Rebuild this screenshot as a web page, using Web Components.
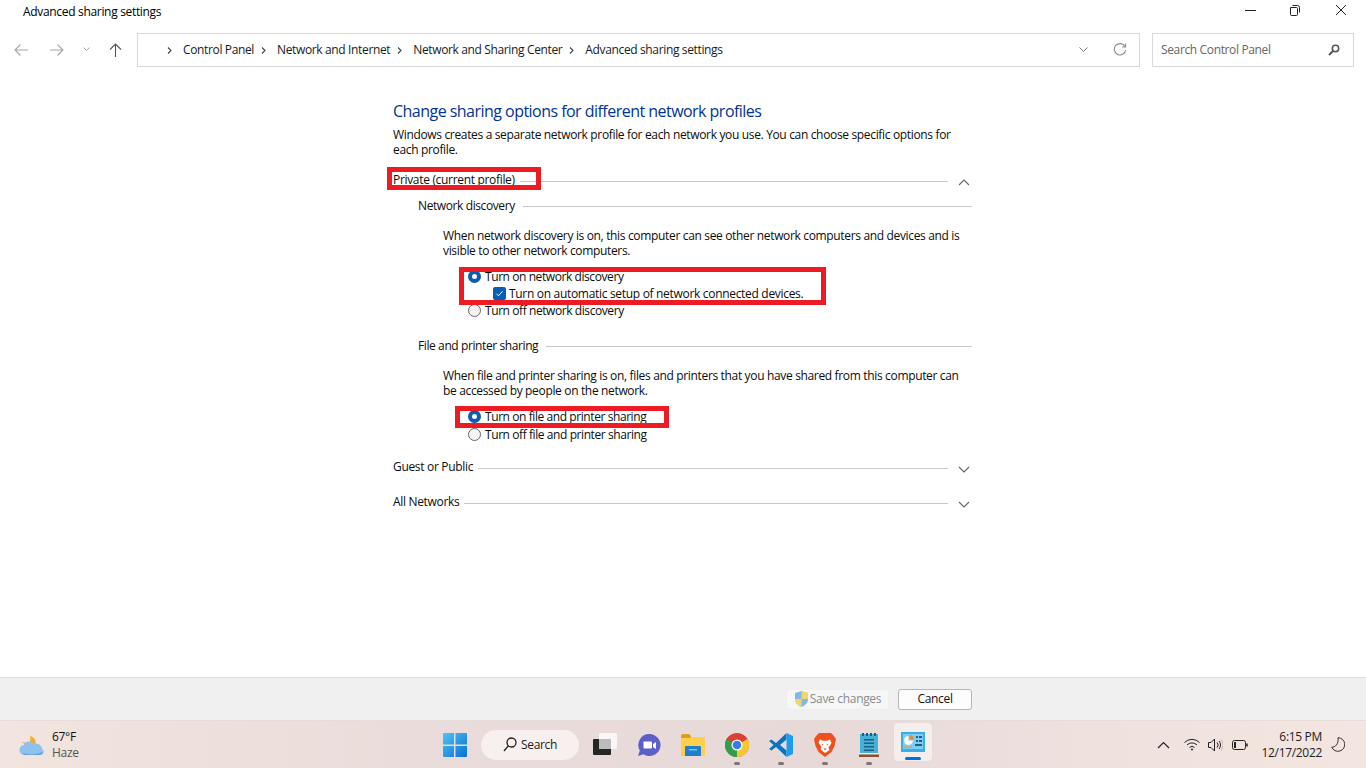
<!DOCTYPE html>
<html lang="en">
<head>
<meta charset="utf-8">
<title>Advanced sharing settings</title>
<style>
  html, body { margin: 0; height: 100%; overflow: hidden; background: #fff; }
  body { font: 12px/16px "Open Sans", "Liberation Sans", sans-serif; letter-spacing: -0.32px; color: #0c0c0c; }
</style>
</head>
<body>
<share-window>
  <win-titlebar slot="top">Advanced sharing settings</win-titlebar>
  <win-navbar slot="top"></win-navbar>

  <h-title>Change sharing options for different network profiles</h-title>
  <p-text>Windows creates a separate network profile for each network you use. You can choose specific options for each profile.</p-text>

  <profile-head open>Private (current profile)</profile-head>
  <group-head>Network discovery</group-head>
  <p-text indent>When network discovery is on, this computer can see other network computers and devices and is visible to other network computers.</p-text>
  <opt-radio checked style="margin-top:10px">Turn on network discovery</opt-radio>
  <opt-check>Turn on automatic setup of network connected devices.</opt-check>
  <opt-radio>Turn off network discovery</opt-radio>

  <group-head style="margin-top:18px">File and printer sharing</group-head>
  <p-text indent>When file and printer sharing is on, files and printers that you have shared from this computer can be accessed by people on the network.</p-text>
  <opt-radio checked style="margin-top:10px">Turn on file and printer sharing</opt-radio>
  <opt-radio style="margin-top:1px">Turn off file and printer sharing</opt-radio>

  <profile-head style="margin-top:15px">Guest or Public</profile-head>
  <profile-head style="margin-top:17px">All Networks</profile-head>

  <win-footer slot="bottom"></win-footer>
  <win-taskbar slot="bottom"></win-taskbar>
</share-window>

<red-box style="left:387px;top:167px;width:154px;height:23px"></red-box>
<red-box style="left:459px;top:267px;width:367px;height:38px"></red-box>
<red-box style="left:455px;top:406px;width:214px;height:22px"></red-box>

<script>
function shadow(el, html) {
  el.attachShadow({ mode: "open" }).innerHTML = html;
}

class ShareWindow extends HTMLElement {
  connectedCallback() {
    shadow(this, `<style>
      :host { display: flex; flex-direction: column; width: 1366px; height: 768px; }
      main { flex: 1; box-sizing: border-box; width: 579px; margin-left: 393px; padding-top: 33px; display: flex; flex-direction: column; }
    </style>
    <slot name="top"></slot>
    <main><slot></slot></main>
    <slot name="bottom"></slot>`);
  }
}

class WinTitlebar extends HTMLElement {
  connectedCallback() {
    shadow(this, `<style>
      :host { display: flex; align-items: center; height: 24px; padding-left: 23px; color: #000; }
      span { flex: 1; }
      svg { position: absolute; top: 4px; }
    </style>
    <span><slot></slot></span>
    <svg style="left:1245px" width="12" height="12" viewBox="0 0 12 12" fill="none" stroke="#222"><path d="M0 6.5h11"/></svg>
    <svg style="left:1289px" width="12" height="12" viewBox="0 0 12 12" fill="none" stroke="#222"><path d="M1.5 3.5h6a1 1 0 0 1 1 1v6a1 1 0 0 1-1 1h-5a1 1 0 0 1-1-1z"/><path d="M3.5 1.5h5a2 2 0 0 1 2 2v5"/></svg>
    <svg style="left:1335px" width="12" height="12" viewBox="0 0 12 12" fill="none" stroke="#222"><path d="M1 1l10 10M11 1L1 11"/></svg>`);
  }
}

class WinNavbar extends HTMLElement {
  connectedCallback() {
    const chev = `<svg class="sep" width="5" height="7" viewBox="0 0 5 7" fill="none" stroke="#444" stroke-width="1.1"><path d="M1 .5l3 3-3 3"/></svg>`;
    const crumbs = ["Control Panel", "Network and Internet", "Network and Sharing Center", "Advanced sharing settings"];
    shadow(this, `<style>
      :host { display: flex; align-items: center; height: 34px; margin-top: 9px; letter-spacing: -0.36px; }
      .btns { width: 137px; position: relative; height: 34px; flex: none; }
      .btns svg { position: absolute; top: 10px; }
      .addr { width: 1003px; height: 34px; box-sizing: border-box; border: 1px solid #d9d9d9; display: flex; align-items: center; padding-left: 29px; flex: none; color: #1a1a1a; }
      .addr span { margin-right: 7px; }
      .sep { margin: 0 11px 0 0; }
      .end { margin-left: auto; display: flex; align-items: center; gap: 25px; padding-right: 12px; }
      .search { width: 202px; height: 34px; box-sizing: border-box; border: 1px solid #d9d9d9; margin-left: 12px; display: flex; align-items: center; justify-content: space-between; padding: 0 13px 0 8px; color: #666; flex: none; }
    </style>
    <div class="btns">
      <svg style="left:14px" width="14" height="14" viewBox="0 0 14 14" fill="none" stroke="#a6a6a6" stroke-width="1.1"><path d="M14 7H1M6.5 1.5L1 7l5.500 5.500"/></svg>
      <svg style="left:50px" width="14" height="14" viewBox="0 0 14 14" fill="none" stroke="#a6a6a6" stroke-width="1.1"><path d="M0 7h13M7.500 1.500L13 7l-5.500 5.500"/></svg>
      <svg style="left:83px;top:14px" width="7" height="5" viewBox="0 0 7 5" fill="none" stroke="#a6a6a6"><path d="M.5 .5l3 3 3-3"/></svg>
      <svg style="left:109px" width="13" height="14" viewBox="0 0 13 14" fill="none" stroke="#555" stroke-width="1.100"><path d="M6.500 14V1M1 6.500L6.500 1 12 6.500"/></svg>
    </div>
    <div class="addr">
      ${crumbs.map((c) => `${chev}<span>${c}</span>`).join("")}
      <div class="end">
        <svg width="9" height="6" viewBox="0 0 9 6" fill="none" stroke="#777"><path d="M.5 .5l4 4 4-4"/></svg>
        <svg width="14" height="14" viewBox="0 0 14 14" fill="none" stroke="#8a8a8a" stroke-width="1.100"><path d="M12 3.500A5.700 5.700 0 1 0 12.700 7"/><path d="M12.500 .5v3.500H9"/></svg>
      </div>
    </div>
    <div class="search">
      <span>Search Control Panel</span>
      <svg width="12" height="12" viewBox="0 0 12 12" fill="none" stroke="#555" stroke-width="1.500"><circle cx="7.500" cy="4.500" r="3.200"/><path d="M5 7l-4 4" stroke-width="2"/></svg>
    </div>`);
  }
}

class HTitle extends HTMLElement {
  connectedCallback() {
    shadow(this, `<style>
      :host { display: block; font-size: 16px; line-height: 22px; color: #003399; letter-spacing: -0.53px; margin-bottom: 5px; }
    </style><slot></slot>`);
  }
}

class PText extends HTMLElement {
  connectedCallback() {
    shadow(this, `<style>
      :host { display: block; line-height: 15px; letter-spacing: -0.34px; }
      :host([indent]) { margin: 13px 0 0 50px; width: 524px; }
    </style><slot></slot>`);
  }
}

class ProfileHead extends HTMLElement {
  connectedCallback() {
    const up = this.hasAttribute("open");
    shadow(this, `<style>
      :host { display: flex; align-items: center; height: 18px; margin-top: 14px; width: 579px; }
      i { flex: 1; height: 1px; background: #c8c8c8; margin: 2px 0 0 5px; }
      svg { margin: 4px 2px 0 10px; }
    </style><slot></slot><i></i>
    <svg width="12" height="7" viewBox="0 0 12 7" fill="none" stroke="#666" stroke-width="1.100"><path d="${up ? "M1 6l5-5 5 5" : "M1 1l5 5 5-5"}"/></svg>`);
  }
}

class GroupHead extends HTMLElement {
  connectedCallback() {
    shadow(this, `<style>
      :host { display: flex; align-items: center; height: 18px; margin: 8px 0 0 25px; letter-spacing: -0.4px; }
      i { flex: 1; height: 1px; background: #c8c8c8; margin-left: 8px; }
    </style><slot></slot><i></i>`);
  }
}

class OptRadio extends HTMLElement {
  connectedCallback() {
    const on = this.hasAttribute("checked");
    shadow(this, `<style>
      :host { display: flex; align-items: center; height: 17px; margin-left: 75px; gap: 4px; letter-spacing: -0.42px; }
      b { width: 13px; height: 13px; border-radius: 50%; box-sizing: border-box; flex: none; }
      .on { background: #fff; border: 4px solid #0b5cb5; }
      .off { background: #f4f4f4; border: 1px solid #666; }
    </style><b class="${on ? "on" : "off"}"></b><span><slot></slot></span>`);
  }
}

class OptCheck extends HTMLElement {
  connectedCallback() {
    shadow(this, `<style>
      :host { display: flex; align-items: center; height: 17px; margin-left: 100px; gap: 3px; letter-spacing: -0.31px; }
      svg { flex: none; }
    </style>
    <svg width="13" height="13" viewBox="0 0 13 13"><rect width="13" height="13" rx="2" fill="#0b5cb5"/><path d="M3.500 6.800l2 2 4-4.500" fill="none" stroke="#fff"/></svg>
    <span><slot></slot></span>`);
  }
}

class WinFooter extends HTMLElement {
  connectedCallback() {
    shadow(this, `<style>
      :host { display: flex; align-items: center; height: 43px; box-sizing: border-box; background: #f0f0f0; border-top: 1px solid #dfdfdf; padding-left: 786px; gap: 9px; }
      div { height: 21px; box-sizing: border-box; border-radius: 3px; display: flex; align-items: center; justify-content: center; }
      .save { width: 103px; background: #f6f6f6; border: 1px solid #eeeeee; color: #8c8c8c; gap: 1px; }
      .cancel { width: 74px; background: #fdfdfd; border: 1px solid #b5b5b5; color: #111; }
    </style>
    <div class="save">
      <svg width="15" height="16" viewBox="0 0 15 16"><path d="M7.500 0L14 2v6c0 4-3 6.500-6.500 8C4 14.500 1 12 1 8V2z" fill="#80b8e8"/><path d="M7.500 0L14 2v6H7.500zM7.500 8v8C4 14.500 1 12 1 8z" fill="#f3d56a"/></svg>
      Save changes
    </div>
    <div class="cancel">Cancel</div>`);
  }
}

class WinTaskbar extends HTMLElement {
  connectedCallback() {
    shadow(this, `<style>
      :host { display: flex; align-items: center; height: 48px; box-sizing: border-box; position: relative; border-top: 1px solid #e6dcd8; background: linear-gradient(90deg, #f2e5df 0%, #e9dcda 30%, #e8d9d9 60%, #f0e3df 85%, #f3e6e0 100%); color: #111; }
      .weather { width: 430px; padding-left: 19px; display: flex; align-items: center; gap: 6px; flex: none; box-sizing: border-box; }
      .weather > div { padding-top: 1px; }
      .weather small { display: block; font-size: 12px; color: #555; }
      .logo { width: 50px; display: flex; justify-content: center; flex: none; }
      .pill { width: 98px; height: 30px; border-radius: 15px; background: #f7f0ef; display: flex; align-items: center; justify-content: center; gap: 4px; margin-left: 1px; flex: none; color: #222; }
      .apps { display: flex; margin-left: 4px; flex: none; }
      .app { width: 44px; height: 48px; display: flex; align-items: center; justify-content: center; position: relative; }
      .app.dot::after { content: ""; position: absolute; bottom: 4px; left: 19px; width: 6px; height: 3px; border-radius: 2px; background: #7d7774; }
      .app.active { width: 38px; height: 38px; margin: 2px 3px 0; border-radius: 4px; background: #f4eeed; box-shadow: 0 0 1px #d8cccc; }
      .app.active::after { content: ""; position: absolute; bottom: 1px; left: 11px; width: 16px; height: 3px; border-radius: 2px; background: #0a6ed1; }
      .tray { margin-left: auto; display: flex; align-items: center; flex: none; }
      .icons { display: flex; align-items: center; gap: 8px; margin-right: 14px; }
      .clock { width: 60px; white-space: nowrap; display: flex; flex-direction: column; align-items: flex-end; color: #222; margin-right: 9px; }
      .moon { margin-right: 21px; }
    </style>
    <div class="weather">
      <svg width="27" height="24" viewBox="0 0 27 24">
        <path d="M8 11c3-1 4-4 3-8 5 1 7 6 5 10z" fill="#f5ad2c"/><path d="M2 9c2 1 5 1 7 0l1 4z" fill="#ee8f1f"/>
        <path d="M6 22a5 5 0 0 1-1-10c1-4 7-5 10-1 4-1 8 1 8 5 3 2 2 6-2 6z" fill="#8fc1ef"/>
        <path d="M4 20c5 2 14 2 20-1-1 2-2 3-4 3H6c-1 0-2-1-2-2z" fill="#5e9fe2"/>
      </svg>
      <div>67°F<small>Haze</small></div>
    </div>
    <div class="logo">
      <svg width="24" height="24" viewBox="0 0 24 24">
        <defs><linearGradient id="w" x1="0" y1="0" x2="1" y2="1"><stop offset="0" stop-color="#4cc5f5"/><stop offset="1" stop-color="#0a6fd6"/></linearGradient></defs>
        <path d="M0 1a1 1 0 0 1 1-1h10v11.500H0zM12.500 0H23a1 1 0 0 1 1 1v10.500H12.500zM0 13h11v11H1a1 1 0 0 1-1-1zM12.500 13H24v10a1 1 0 0 1-1 1H12.500z" fill="url(#w)"/>
      </svg>
    </div>
    <div class="pill">
      <svg width="14" height="15" viewBox="0 0 14 15" fill="none" stroke="#222" stroke-width="1.300"><circle cx="8.500" cy="5.500" r="4.500"/><path d="M5.300 8.800L1 14"/></svg>
      Search
    </div>
    <div class="apps">
      <div class="app"><svg width="24" height="24" viewBox="0 0 24 24"><rect x="6" y="0" width="18" height="16" rx="1" fill="#f8f6f6"/><rect x="0" y="6" width="18" height="16" rx="1" fill="#262626"/><rect x="6" y="6" width="12" height="10" fill="#bdbcbc"/></svg></div>
      <div class="app"><svg width="24" height="24" viewBox="0 0 24 24"><path d="M12.500 1a11 11 0 1 1-6 20.200L1 23l1.800-5.500A11 11 0 0 1 12.500 1z" fill="#5b5fc7"/><path d="M6.500 8.500h7.500a1 1 0 0 1 1 1v5a1 1 0 0 1-1 1H7.500a1 1 0 0 1-1-1zM16 11l3-2v7l-3-2z" fill="#fff"/></svg></div>
      <div class="app"><svg width="24" height="22" viewBox="0 0 24 22"><path d="M0 2a2 2 0 0 1 2-2h6l2 2-1 3H0z" fill="#d9a019"/><path d="M0 4h9l2-1h13v18a1 1 0 0 1-1 1H1a1 1 0 0 1-1-1z" fill="#fdcf4d"/><path d="M4 13a1 1 0 0 1 1-1h14a1 1 0 0 1 1 1v9H4z" fill="#1f7fcc"/><path d="M8 15h8v1.500H8z" fill="#7cc0ee"/></svg></div>
      <div class="app dot"><svg width="24" height="24" viewBox="0 0 24 24"><circle cx="12" cy="12" r="12" fill="#d93f32"/><path d="M12 12L22.400 6A12 12 0 0 1 12 24z" fill="#f6c92f"/><path d="M12 12L12 24A12 12 0 0 1 1.600 6z" fill="#2f9e4d"/><circle cx="12" cy="12" r="5.500" fill="#fff"/><circle cx="12" cy="12" r="4.300" fill="#3f78e0"/></svg></div>
      <div class="app dot"><svg width="24" height="24" viewBox="0 0 24 24"><path d="M17.500 0L7 10 2.500 6.500 0 8l4.500 4L0 16l2.500 1.500L7 14l10.500 10v-6.500L11 12l6.500-5.500z" fill="#0b74bd"/><path d="M17.500 0L24 3v18l-6.500 3z" fill="#1e9cf0"/></svg></div>
      <div class="app dot"><svg width="22" height="24" viewBox="0 0 22 24"><path d="M5 0h12l2.500 2.500L22 6l-1.500 7-3 6-6.500 5-6.500-5-3-6L0 6l2.500-3.500z" fill="#f0501e"/><path d="M6 6.500l3 1.200h4l3-1.200 1.500 3.500-3 4.500 1 2.500L11 20l-4.500-3.500 1-2.500-3-4.500z" fill="#fff"/><path d="M7.500 10.500l2 1-1 1zM14.500 10.500l-2 1 1 1zM9.500 15.500h3L11 17.500z" fill="#f0501e"/></svg></div>
      <div class="app dot"><svg width="20" height="24" viewBox="0 0 20 24"><rect x="1" y="1" width="18" height="19" fill="#46b1d8"/><path d="M1 20h18v1H1z" fill="#e4eef0"/><path d="M0 21.500h20V24H0z" fill="#8a5228"/><path d="M3 0h2v3H3zM7 0h2v3H7zM11 0h2v3h-2zM15 0h2v3h-2z" fill="#1f5f7c"/><path d="M5 6h10v1.500H5zM5 9.500h10V11H5zM5 13h10v1.500H5zM5 16.500h10V18H5z" fill="#1e5f80"/></svg></div>
      <div class="app active"><svg width="24" height="20" viewBox="0 0 24 20"><rect width="24" height="20" fill="#39ade6"/><rect x="2" y="2" width="20" height="15" fill="#7fcdf0"/><path d="M7.500 4a4.500 4.500 0 1 0 4.500 4.500H7.500z" fill="#f8fbfd"/><path d="M8.500 3a4.500 4.500 0 0 1 4.500 4.500H8.500z" fill="#f08a24"/><path d="M3 14.500h8v1.500H3z" fill="#f0a030"/><path d="M15 4h2v2h-2zM18 4h3v2h-3zM15 8h2v2h-2zM18 8h3v2h-3zM14 12h7v2h-7z" fill="#17608f"/></svg></div>
    </div>
    <div class="tray">
      <div class="icons">
        <svg style="margin-right:6px" width="13" height="8" viewBox="0 0 13 8" fill="none" stroke="#222" stroke-width="1.200"><path d="M1 7l5.500-5.500L12 7"/></svg>
        <svg width="16" height="13" viewBox="0 0 16 13" fill="none" stroke="#222"><path d="M.5 4.500a10.500 10.500 0 0 1 15 0M3 7a7 7 0 0 1 10 0M5.500 9.500a3.500 3.500 0 0 1 5 0"/><circle cx="8" cy="11.500" r="1" fill="#222" stroke="none"/></svg>
        <svg width="15" height="14" viewBox="0 0 15 14" fill="none" stroke="#222"><path d="M.5 4.500H3L6.500 1v12L3 9.500H.5zM9 4.500a3.500 3.500 0 0 1 0 5"/><path d="M11 3a6 6 0 0 1 0 8"/><path d="M13 1.500a9 9 0 0 1 0 11" stroke="#bbb"/></svg>
        <svg style="margin-left:1px" width="16" height="10" viewBox="0 0 16 10" fill="none" stroke="#222"><rect x=".5" y=".5" width="13" height="9" rx="2"/><rect x="2" y="2" width="2" height="6" fill="#222" stroke="none"/><path d="M15 3.500v3" stroke-width="1.500"/></svg>
      </div>
      <div class="clock"><span>6:15 PM</span><span>12/17/2022</span></div>
      <svg class="moon" width="14" height="15" viewBox="0 0 14 15" fill="none" stroke="#333"><path d="M7 .7a6.800 6.800 0 1 1-6.300 9.500C4 10.500 8 7 7 .7z"/></svg>
    </div>`);
  }
}

class RedBox extends HTMLElement {
  connectedCallback() {
    shadow(this, `<style>
      :host { display: block; position: absolute; box-sizing: border-box; border: 5px solid #ed1c24; }
    </style>`);
  }
}

customElements.define("share-window", ShareWindow);
customElements.define("win-titlebar", WinTitlebar);
customElements.define("win-navbar", WinNavbar);
customElements.define("h-title", HTitle);
customElements.define("p-text", PText);
customElements.define("profile-head", ProfileHead);
customElements.define("group-head", GroupHead);
customElements.define("opt-radio", OptRadio);
customElements.define("opt-check", OptCheck);
customElements.define("win-footer", WinFooter);
customElements.define("win-taskbar", WinTaskbar);
customElements.define("red-box", RedBox);
</script>
</body>
</html>
